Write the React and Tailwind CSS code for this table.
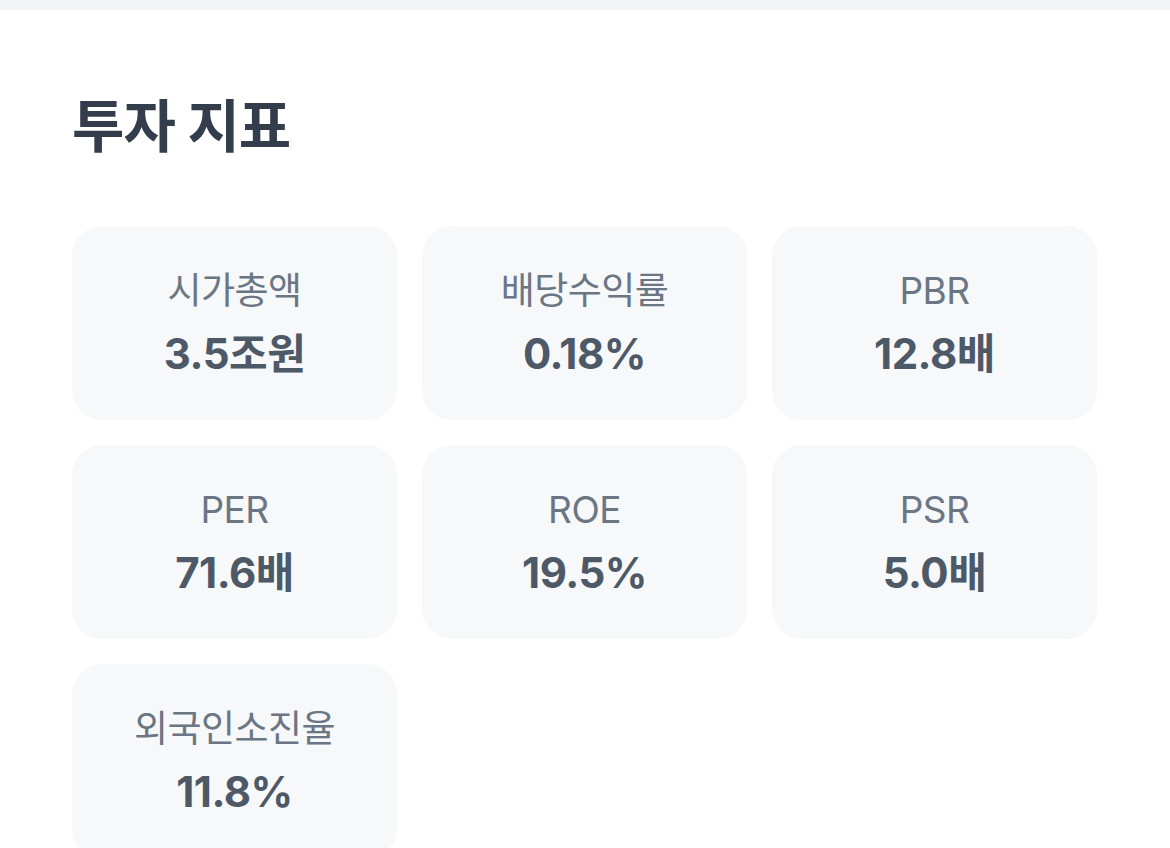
import React from 'react';

const metrics = [
  { label: '시가총액', value: '3.5조원' },
  { label: '배당수익률', value: '0.18%' },
  { label: 'PBR', value: '12.8배' },
  { label: 'PER', value: '71.6배' },
  { label: 'ROE', value: '19.5%' },
  { label: 'PSR', value: '5.0배' },
  { label: '외국인소진율', value: '11.8%' },
];

const MetricCard = ({ label, value }) => (
  <div className="h-[194px] rounded-[30px] bg-[#f7f8f9] flex flex-col items-center justify-center">
    <div className="text-[37px] leading-[48px] text-[#6b7684] tracking-[-0.5px]">{label}</div>
    <div className="mt-[14px] text-[42px] leading-[50px] font-bold text-[#4e5968] tracking-[-0.5px]">{value}</div>
  </div>
);

export default function App() {
  return (
    <div
      className="w-[1170px] h-[848px] overflow-hidden bg-white"
      style={{ fontFamily: '"Inter", "Noto Sans CJK KR", sans-serif' }}
    >
      <div className="h-[10px] bg-[#f2f4f6]" />
      <div className="px-[72px] pt-[78px]">
        <h2 className="text-[57px] leading-[78px] font-bold text-[#333d4b] tracking-[-1px]">투자 지표</h2>
        <div className="mt-[60px] grid grid-cols-3 gap-[25px] w-[1025px]">
          {metrics.map((m) => (
            <MetricCard key={m.label} label={m.label} value={m.value} />
          ))}
        </div>
      </div>
    </div>
  );
}
